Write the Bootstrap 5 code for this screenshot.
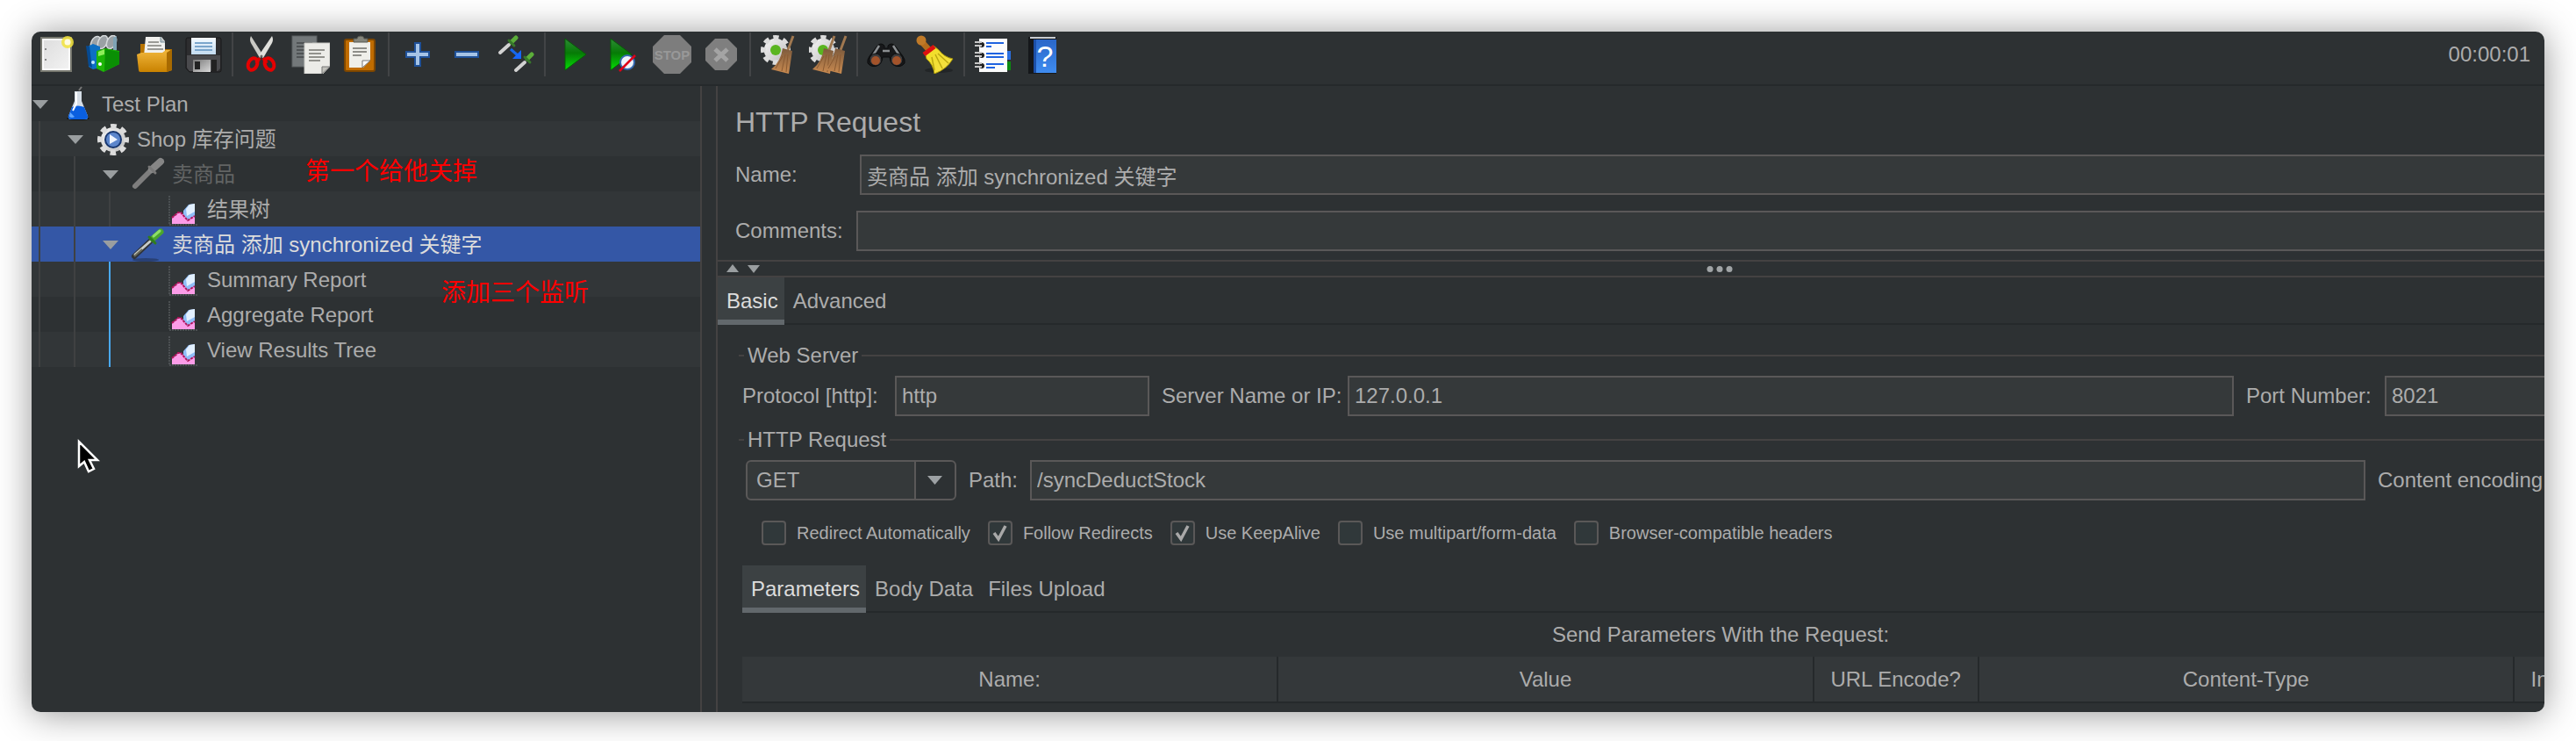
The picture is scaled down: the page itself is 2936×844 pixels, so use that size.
<!DOCTYPE html>
<html lang="zh-CN">
<head>
<meta charset="utf-8">
<meta name="viewport" content="width=device-width, initial-scale=1">
<title>Test Plan - HTTP Request</title>
<link href="https://cdn.jsdelivr.net/npm/bootstrap@5.3.0/dist/css/bootstrap.min.css" rel="stylesheet">
<style>
:root{
  --pane:#2d3133; --stripe:#323638; --field:#35393a; --edge:#5a5858; --rule:#444242; --dark-rule:#25292b;
  --ink:#acacac; --ink-strong:#dcdcdc; --ink-off:#626464; --select:#3457a6;
}
body{background:#fff;color:var(--ink);font-family:"Liberation Sans","Noto Sans CJK SC",sans-serif;font-size:24px;line-height:30px;overflow-x:hidden}
.app-window{margin:36px;background:var(--pane);border-radius:10px;overflow:hidden}
.app-shadow{border-radius:10px;box-shadow:0 2px 40px rgba(0,0,0,.42)}
.toolbar{height:62px;border-bottom:2px solid var(--dark-rule);padding:0 16px 8px 0}
.tool{width:56px;height:44px;padding:0 6px;border:0;background:none;line-height:0}
.tool svg{width:44px;height:44px}
.tool-sep{width:2px;height:50px;margin:0 4px;background:#424446}
.timer{line-height:30px}

.tree-pane{width:764px;flex:none;border-right:2px solid var(--rule)}
.tree-row{height:40px;padding-top:2px;white-space:nowrap}
.tree-row:nth-child(even){background:var(--stripe)}
.tree-row.stripe{background:var(--stripe)}
.tree-row.plain{background:var(--pane)}
.tree-row.selected{background:var(--select);color:var(--ink-strong)}
.tree-row.off{color:var(--ink-off)}
.guide{width:40px;flex:none;align-self:stretch;margin-top:-2px;background:linear-gradient(#3f4142,#3f4142) 8px 0/2px 100% no-repeat}
.guide.active{background:linear-gradient(#4aa9f2,#4aa9f2) 8px 0/2px 100% no-repeat}
.twisty{width:20px;flex:none;line-height:0;margin-right:11px}
.twisty svg{width:20px;height:12px}
.node-icon{width:44px;height:40px;flex:none;margin:-2px 5px 0 0}
.note{position:absolute;color:#f00;font-size:28px;line-height:42px;white-space:nowrap}
.note-close{left:312px;top:77px}
.note-listen{left:467px;top:215px}
.pointer{position:absolute;left:50px;top:402px;width:28px;height:40px}

.splitter{width:16px;flex:none}
.work-pane{min-width:0;overflow:hidden;border-left:2px solid var(--rule)}
.work-inner{width:calc(100% + 202px)}
.head-form{padding:21px 0 10px 20px}
.head-form h1{font-size:32px;line-height:40px;margin:0 0 17px;font-weight:400;color:var(--ink)}
.form-control,.form-select{height:46px;border:2px solid var(--edge);border-radius:0;background-color:var(--field);color:var(--ink);font-size:24px;line-height:30px;padding:0 6px}
.form-select{width:240px;border-radius:6px;padding-left:10px;background-image:url("data:image/svg+xml,%3Csvg xmlns='http://www.w3.org/2000/svg' viewBox='0 0 46 42'%3E%3Cpath fill='%232d3133' d='M0 0h46v42H0z'/%3E%3Cpath fill='%235a5858' d='M0 0h2v42H0z'/%3E%3Cpath fill='%239da1a4' d='M15 16h17l-8.500 10z'/%3E%3C/svg%3E");background-size:46px 42px;background-position:right 0 top 0}
.lbl-name{width:142px}.lbl-comments{width:138px}
.lbl-protocol{width:174px}.lbl-server{width:214px}.lbl-port{width:160px}.lbl-path{width:72px}.lbl-encoding{width:196px}
.lbl-inner{padding-left:2px;white-space:nowrap}
.w-protocol{width:290px}.w-port{width:358px}.w-encoding{width:172px}
.name-row{margin-bottom:18px}
.collapse-bar{height:20px;border-top:2px solid var(--rule);border-bottom:2px solid var(--rule);position:relative}
.collapse-bar button{border:0;padding:0;background:none;line-height:0;width:14px;height:12px}
.collapse-btns{gap:10px;padding-left:10px}
.grip i{width:7px;height:7px;border-radius:50%;background:#a0a4a6}
.tab-strip{height:54px;border-bottom:2px solid var(--dark-rule)}
.tab-strip button{height:54px;padding:0 7px 0 10px;border:0;background:none;color:var(--ink);white-space:nowrap}
.tab-strip button.active{background:#3c4143;color:var(--ink-strong);box-shadow:inset 0 -6px #62686c}
.basic-pane{padding:20px 26px 10px 24px}
.group-title{float:none;font-size:24px;line-height:30px;margin:0 0 8px;gap:4px}
.group-title::before,.group-title::after{content:"";height:2px;background:var(--rule);width:6px}
.group-title::after{flex:1}
.http-group{margin-top:12px}
.field-row{padding-left:4px}
.check-row{gap:20px;font-size:20px;padding-left:26px;margin:22px 0}
.check-row .form-check-input{width:28px;height:28px;margin:0;float:none;border:2px solid var(--edge);border-radius:4px;background-color:#30383a}
.check-row .form-check-input:checked{background-image:url("data:image/svg+xml,%3Csvg xmlns='http://www.w3.org/2000/svg' viewBox='0 0 24 24'%3E%3Cpath fill='none' stroke='%23a8a8a8' stroke-width='3.500' d='M5 12l5 7 8-15'/%3E%3C/svg%3E")}
.inner-tabs{margin-left:4px;margin-right:-26px}
.param-area{margin-left:4px}
.param-title{margin:10px 0}
.param-table{table-layout:fixed;width:100%}
.param-table th{height:52px;background:#34383a;border-bottom:2px solid var(--dark-rule);border-right:2px solid var(--dark-rule);font-weight:400;text-align:center;padding:0}
.c-encode{width:188px}.c-equals{width:210px}
</style>
</head>
<body>

<svg width="0" height="0" class="position-absolute" aria-hidden="true">
  <defs>
    <linearGradient id="gGreen" x1="0" y1="0" x2="0" y2="1"><stop offset="0" stop-color="#2e8b36"/><stop offset=".45" stop-color="#067a06"/><stop offset="1" stop-color="#04e004"/></linearGradient>
    <linearGradient id="gFolder" x1="0" y1="0" x2="0" y2="1"><stop offset="0" stop-color="#f0b63c"/><stop offset="1" stop-color="#c98200"/></linearGradient>
    <linearGradient id="gPaper" x1="0" y1="0" x2="1" y2="1"><stop offset="0" stop-color="#dcdcdc"/><stop offset="1" stop-color="#f4f4f4"/></linearGradient>
    <linearGradient id="gLabel" x1="0" y1="0" x2="0" y2="1"><stop offset="0" stop-color="#f4faff"/><stop offset="1" stop-color="#c3dbf0"/></linearGradient>
    <linearGradient id="gMetal" x1="0" y1="0" x2="1" y2="1"><stop offset="0" stop-color="#777"/><stop offset="1" stop-color="#d8d8d8"/></linearGradient>
    <linearGradient id="gBroom" x1="0" y1="0" x2="0" y2="1"><stop offset="0" stop-color="#7c5a3c"/><stop offset="1" stop-color="#c98a50"/></linearGradient>
    <linearGradient id="gBlue" x1="0" y1="0" x2="0" y2="1"><stop offset="0" stop-color="#2a66c8"/><stop offset="1" stop-color="#3f8cf0"/></linearGradient>
    <linearGradient id="gYellow" x1="0" y1="0" x2="1" y2="1"><stop offset="0" stop-color="#f0de20"/><stop offset="1" stop-color="#f5e04a"/></linearGradient>
    <linearGradient id="gSteel" x1="0" y1="0" x2="1" y2="1"><stop offset="0" stop-color="#f6f6f6"/><stop offset="1" stop-color="#bcbcbc"/></linearGradient>
    <symbol id="gear" viewBox="0 0 36 36">
      <circle cx="18" cy="18" r="14" fill="url(#gSteel)"/>
      <circle cx="18" cy="18" r="15" fill="none" stroke="#dcdcdc" stroke-width="6" stroke-dasharray="6.500 5.280" stroke-dashoffset="3.250"/>
    </symbol>
    <symbol id="broomette" viewBox="0 0 28 44">
      <path d="M26 1l-6 16" stroke="#a07850" stroke-width="3" fill="none"/>
      <path d="M14 15l11 3-4 26-8-2-12-3q11-9 13-24z" fill="url(#gBroom)"/>
      <path d="M17 22l-4 19M20 22l-2 20M14 24l-8 14" stroke="#8a5a32" stroke-width="1" fill="none"/>
    </symbol>
    <symbol id="flask" viewBox="0 0 44 40">
      <path d="M26 1l-3 4" stroke="#777" stroke-width="2"/>
      <ellipse cx="22" cy="37" rx="13" ry="2" fill="#15181a"/>
      <path d="M18 6h8v11l7 17q1 4-3 4H14q-4 0-3-4l7-17z" fill="#d5dde6"/>
      <path d="M15 24q7-3 14 0l4 10q1 4-3 4H14q-4 0-3-4z" fill="#0a5fe0"/>
      <path d="M13 30l-1 5q3 2 6 0z" fill="#5fa5ff"/>
      <path d="M20 7v13l-4 8" stroke="#fff" stroke-width="2" fill="none"/>
    </symbol>
    <symbol id="threads" viewBox="0 0 44 40">
      <use href="#gear" x="4" y="3" width="36" height="36"/>
      <circle cx="22" cy="21" r="10" fill="#17366f"/><circle cx="22" cy="21" r="8" fill="#5c86cc"/>
      <path d="M18 15l9 6-9 5z" fill="#eef4ff"/>
    </symbol>
    <symbol id="dropper" viewBox="0 0 44 40">
      <ellipse cx="19" cy="38" rx="15" ry="2" fill="#15181a" opacity=".35"/>
      <path d="M6 34L24 17" stroke="#30343a" stroke-width="6" stroke-linecap="round"/>
      <path d="M7 32L24 17" stroke="#c8ccc8" stroke-width="3" stroke-linecap="round"/>
      <path d="M6 34l9-8" stroke="#6a6a58" stroke-width="2"/>
      <path d="M27 14L36 6" stroke="#4aa62c" stroke-width="7" stroke-linecap="round"/>
      <path d="M23 12l7 7" stroke="#2f7d1c" stroke-width="3" stroke-linecap="round"/>
      <path d="M28 11l7-6" stroke="#8ede68" stroke-width="3" stroke-linecap="round"/>
    </symbol>
    <symbol id="dropper-off" viewBox="0 0 44 40">
      <path d="M7 34L24 17" stroke="#7e7e7e" stroke-width="6" stroke-linecap="round"/>
      <path d="M26 15L36 6" stroke="#868686" stroke-width="8" stroke-linecap="round"/>
      <path d="M23 12l7 7" stroke="#787878" stroke-width="3" stroke-linecap="round"/>
    </symbol>
    <symbol id="chart" viewBox="0 0 44 40">
      <path d="M6 5v33h32" stroke="#555a5c" stroke-width="1.500" stroke-dasharray="2 1" fill="none"/>
      <path d="M22 32V22l6-7 7-1v20z" fill="#8fbdf8"/><path d="M25 20l4-5 6-1v9l-9 5z" fill="#e2f0ff"/>
      <path d="M9 37v-7l7-6h4l7 9 8-5v9z" fill="#fb9ce8"/>
      <path d="M9 30l7-6h3l8 9 8-5" stroke="#b0155c" stroke-width="2" stroke-dasharray="3 1" fill="none"/>
    </symbol>
    <symbol id="down" viewBox="0 0 20 12"><path d="M1 1h18l-9 10z" fill="#9a9ea0"/></symbol>
  </defs>
</svg>

<div class="app-window app-shadow">
  <header class="toolbar d-flex align-items-center" role="toolbar">
    <button class="tool" title="New"><svg viewBox="0 0 44 44"><rect x="5" y="3" width="34" height="38" fill="url(#gPaper)" stroke="#77786f" stroke-width="2"/><rect x="7" y="5" width="30" height="34" fill="none" stroke="#fff" stroke-width="1.500"/><path d="M9 16h2M9 28h2" stroke="#888" stroke-width="2"/><circle cx="35" cy="8" r="7" fill="#f2e33c" opacity=".85"/><circle cx="35" cy="8" r="3.500" fill="#fffbe0"/></svg></button>
    <button class="tool" title="Templates"><svg viewBox="0 0 44 44"><g fill="#9aa0a4" stroke="#d4d8da" stroke-width="1.500"><ellipse cx="11" cy="9" rx="5" ry="8" transform="rotate(25 11 9)"/><ellipse cx="19" cy="8" rx="5" ry="8" transform="rotate(25 19 8)"/><ellipse cx="29" cy="8" rx="5" ry="8" transform="rotate(25 29 8)"/></g><path d="M31 3l4-2v16l-4 2z" fill="#7fa3b5"/><path d="M2 13l6-3 8 3v24l-8 2-5-3z" fill="#0d6fc4"/><path d="M0 12l4 1 3 24-4-2z" fill="#064a92"/><path d="M12 18l10-3 16 3v15l-18 9-8-4z" fill="#1db507"/><path d="M22 16l16 3v14l-17 8z" fill="#0a8f04"/><path d="M14 19l7-3 0 6-7 2z" fill="#8fee5a"/><circle cx="16" cy="33" r="2" fill="#fff"/><circle cx="8" cy="31" r="2" fill="#bfe4ff"/></svg></button>
    <button class="tool" title="Open"><svg viewBox="0 0 44 44"><path d="M6 10h10v6h26v24l-6 2H6z" fill="#b87400"/><path d="M12 2h18l4 5v17H10z" fill="#f1f1ee"/><path d="M15 8h12M14 12h16M14 16h18" stroke="#9b9b96" stroke-width="2"/><path d="M29 2v6h5" fill="#bcc4c6" stroke="#78909a"/><path d="M2 22l5-2h24l4-3h5v23l-4 2H6q-2 0-2-2z" fill="url(#gFolder)"/><path d="M36 20l6-4v24l-6 2z" fill="#a86a00"/></svg></button>
    <button class="tool" title="Save"><svg viewBox="0 0 44 44"><path d="M4 3h36q2 0 2 2v35q0 2-2 2H6l-4-4V5q0-2 2-2z" fill="#2d2d2f" stroke="#19191a"/><path d="M3 23h38v15l-3 3H6l-3-4z" fill="#4a4a4d"/><rect x="8" y="3" width="28" height="19" fill="url(#gLabel)"/><path d="M12 9h20M12 13h20M12 17h20" stroke="#7ba6cc" stroke-width="2"/><rect x="10" y="28" width="20" height="14" fill="url(#gMetal)"/><rect x="12" y="30" width="6" height="9" fill="#222"/><path d="M31 28h6v13h-6z" fill="#222"/></svg></button>
    <span class="tool-sep"></span>
    <button class="tool" title="Cut"><svg viewBox="0 0 44 44"><path d="M10 1q-2 4 0 8l10 17 4-3z" fill="#c9c9c4"/><path d="M34 1q2 4 0 8L24 26l-5-3z" fill="#e0e0dc"/><path d="M20 26l-4 6M24 26l4 6" stroke="#d80000" stroke-width="4"/><ellipse cx="12" cy="33" rx="5" ry="7" transform="rotate(25 12 33)" fill="none" stroke="#e60000" stroke-width="4"/><ellipse cx="31" cy="33" rx="5" ry="7" transform="rotate(-25 31 33)" fill="none" stroke="#e60000" stroke-width="4"/><circle cx="22" cy="24" r="1.500" fill="#666"/></svg></button>
    <button class="tool" title="Copy"><svg viewBox="0 0 44 44"><rect x="1" y="1" width="28" height="35" fill="#73787a" stroke="#5d6163"/><path d="M6 9h18M6 13h10M6 17h10M6 21h10M6 25h10" stroke="#4f5355" stroke-width="2"/><path d="M15 9h29v27l-8 8H15z" fill="#ecece8" stroke="#c8c8c4"/><path d="M20 17h18M20 21h14M20 25h18M20 29h13" stroke="#92928d" stroke-width="2"/><path d="M35 44v-8h9z" fill="#c2c2bc" stroke="#777"/></svg></button>
    <button class="tool" title="Paste"><svg viewBox="0 0 44 44"><rect x="5" y="5" width="34" height="36" rx="2" fill="#c06c00" stroke="#7d4600" stroke-width="2"/><path d="M10 8h24v20l-8 9H10z" fill="#efefea"/><path d="M14 15h16M14 19h16M14 23h10" stroke="#8e8e89" stroke-width="2"/><path d="M25 37v-8h9z" fill="#fff" stroke="#777"/><path d="M15 8V4h4q0-3 4-3t4 3h4v4z" fill="#84857c" stroke="#55564e"/></svg></button>
    <span class="tool-sep"></span>
    <button class="tool" title="Expand All"><svg viewBox="0 0 44 44"><path d="M19 9h6v10h10v6H25v10h-6V25H9v-6h10z" fill="#a5c3e6" stroke="#1f5199" stroke-width="2"/></svg></button>
    <button class="tool" title="Collapse All"><svg viewBox="0 0 44 44"><path d="M9 19h26v6H9z" fill="#a5c3e6" stroke="#1f5199" stroke-width="2"/></svg></button>
    <button class="tool" title="Toggle"><svg viewBox="0 0 44 44"><g stroke-linecap="round"><path d="M4 20L14 11M22 40l10-9" stroke="#d2d2d2" stroke-width="4"/><path d="M17 8l5-5M35 27l5-5" stroke="#5cae3a" stroke-width="5"/><path d="M14 6l6 6M32 25l6 6" stroke="#37782a" stroke-width="3"/></g><path d="M16 16l8 7" stroke="#1767e8" stroke-width="3"/><path d="M28 17v10H18z" fill="#1767ff"/></svg></button>
    <span class="tool-sep"></span>
    <button class="tool" title="Start"><svg viewBox="0 0 44 44"><path d="M12 4l24 18-24 18z" fill="url(#gGreen)" stroke="#075c07"/></svg></button>
    <button class="tool" title="Start no pauses"><svg viewBox="0 0 44 44"><path d="M8 4l24 18L8 40z" fill="url(#gGreen)" stroke="#075c07"/><circle cx="27" cy="31" r="8" fill="#eef4fb" stroke="#3668b0" stroke-width="2"/><path d="M18 41l18-18" stroke="#e00018" stroke-width="2.500"/></svg></button>
    <button class="tool" title="Stop" disabled><svg viewBox="0 0 44 44"><path d="M13 0h18l13 13v18L31 44H13L0 31V13z" fill="#7d7d7d"/><text x="22" y="28" text-anchor="middle" font-family="Liberation Sans Narrow, Liberation Sans, sans-serif" font-weight="700" font-size="15" fill="#989898">STOP</text></svg></button>
    <button class="tool" title="Shutdown" disabled><svg viewBox="0 0 44 44"><path d="M15 4h14l11 11v14L29 40H15L4 29V15z" fill="#7f7f7f"/><path d="M15 16l14 13M29 16L15 29" stroke="#a4a4a4" stroke-width="5"/></svg></button>
    <span class="tool-sep"></span>
    <button class="tool" title="Clear"><svg viewBox="0 0 44 44"><use href="#gear" x="1" y="0" width="34" height="34"/><circle cx="18" cy="17" r="6" fill="#5ab520"/><use href="#broomette" x="12" y="0" width="28" height="44"/></svg></button>
    <button class="tool" title="Clear All"><svg viewBox="0 0 44 44"><use href="#gear" x="-1" y="0" width="34" height="34"/><circle cx="16" cy="17" r="6" fill="#5ab520"/><use href="#broomette" x="3" y="0" width="28" height="44"/><use href="#broomette" x="16" y="0" width="28" height="44"/></svg></button>
    <span class="tool-sep"></span>
    <button class="tool" title="Search"><svg viewBox="0 0 44 44"><path d="M12 12q4-4 8 0v3h4v-3q4-4 8 0l9 12q3 4 2 8-4 5-10 3-6-2-7-10h-8q-1 8-7 10-6 2-10-3-1-4 2-8z" fill="#17181a" stroke="#0c0d0e"/><path d="M14 12l-7 11M30 12l7 11M18 18h8" stroke="#8a8e91" stroke-width="2.500"/><circle cx="10" cy="28" r="7" fill="#3c3c3e" stroke="#0c0d0e"/><circle cx="34" cy="28" r="7" fill="#3c3c3e" stroke="#0c0d0e"/><circle cx="10" cy="29" r="5" fill="#a3532a"/><circle cx="34" cy="29" r="5" fill="#a3532a"/></svg></button>
    <button class="tool" title="Reset Search"><svg viewBox="0 0 44 44"><ellipse cx="26" cy="40" rx="16" ry="3" fill="#222527"/><path d="M6 7l9 10" stroke="#b56d1c" stroke-width="7"/><circle cx="6" cy="6" r="5.500" fill="#c07a28"/><path d="M10 19l10-7 6 5q6 8 16 10-7 12-21 17-1-10-9-17z" fill="url(#gYellow)" stroke="#a89608"/><path d="M22 22l8 16M25 21l12 11M18 25l3 15" stroke="#bba810" stroke-width="1.500"/><path d="M9 22l12-9" stroke="#dc1010" stroke-width="5"/></svg></button>
    <span class="tool-sep"></span>
    <button class="tool" title="Function Helper"><svg viewBox="0 0 44 44"><path d="M38 18h4v10h-4z" fill="#2a6fe0"/><path d="M38 30h4v10h-4z" fill="#0c8a10"/><rect x="6" y="4" width="32" height="38" fill="#fbfbfb"/><path d="M14 9h20M14 13h6M14 21h20M14 25h20M14 33h20M14 37h10" stroke="#1f63e0" stroke-width="2"/><g fill="#222"><circle cx="9" cy="11" r="3"/><circle cx="9" cy="23" r="3"/><circle cx="9" cy="35" r="3"/></g><path d="M1 8h8M1 12h8M1 20h8M1 24h8M1 32h8M1 36h8" stroke="#c6c6c6" stroke-width="2"/></svg></button>
    <button class="tool" title="Help"><svg viewBox="0 0 44 44"><path d="M6 2h32v42H6z" fill="#15171a"/><path d="M8 3h29" stroke="#c8ccd0" stroke-width="2"/><path d="M12 5h26v38H12z" fill="url(#gBlue)"/><path d="M12 5h3v38h-3z" fill="#1c4fa8"/><text x="25" y="36" text-anchor="middle" font-family="Liberation Sans, sans-serif" font-size="34" fill="#fff">?</text></svg></button>
    <time class="timer ms-auto">00:00:01</time>
  </header>

  <div class="d-flex">
    <nav class="tree-pane position-relative" aria-label="Test plan tree">
      <div class="tree-row d-flex align-items-center"><span class="twisty"><svg><use href="#down"/></svg></span><svg class="node-icon"><use href="#flask"/></svg>Test Plan</div>
      <div class="tree-row d-flex align-items-center"><span class="guide"></span><span class="twisty"><svg><use href="#down"/></svg></span><svg class="node-icon"><use href="#threads"/></svg>Shop 库存问题</div>
      <div class="tree-row off d-flex align-items-center"><span class="guide"></span><span class="guide"></span><span class="twisty"><svg><use href="#down"/></svg></span><svg class="node-icon"><use href="#dropper-off"/></svg>卖商品</div>
      <div class="tree-row d-flex align-items-center"><span class="guide"></span><span class="guide"></span><span class="guide"></span><span class="twisty"></span><svg class="node-icon"><use href="#chart"/></svg>结果树</div>
      <div class="tree-row selected d-flex align-items-center"><span class="guide"></span><span class="guide"></span><span class="twisty"><svg><use href="#down"/></svg></span><svg class="node-icon"><use href="#dropper"/></svg>卖商品 添加 synchronized 关键字</div>
      <div class="tree-row stripe d-flex align-items-center"><span class="guide"></span><span class="guide"></span><span class="guide active"></span><span class="twisty"></span><svg class="node-icon"><use href="#chart"/></svg>Summary Report</div>
      <div class="tree-row plain d-flex align-items-center"><span class="guide"></span><span class="guide"></span><span class="guide active"></span><span class="twisty"></span><svg class="node-icon"><use href="#chart"/></svg>Aggregate Report</div>
      <div class="tree-row stripe d-flex align-items-center"><span class="guide"></span><span class="guide"></span><span class="guide active"></span><span class="twisty"></span><svg class="node-icon"><use href="#chart"/></svg>View Results Tree</div>
      <span class="note note-close">第一个给他关掉</span>
      <span class="note note-listen">添加三个监听</span>
      <svg class="pointer" viewBox="0 0 28 40" aria-hidden="true"><path d="M4 3v28l6-5 5 11 6-3-5-10h9z" fill="#000" stroke="#fff" stroke-width="2.500"/></svg>
    </nav>
    <div class="splitter"></div>

    <main class="work-pane flex-grow-1">
      <div class="work-inner">
        <section class="head-form">
          <h1>HTTP Request</h1>
          <div class="name-row d-flex align-items-center">
            <label class="lbl-name flex-shrink-0" for="name">Name:</label>
            <input class="form-control" id="name" type="text" value="卖商品 添加 synchronized 关键字">
          </div>
          <div class="d-flex align-items-center">
            <label class="lbl-comments flex-shrink-0" for="comments">Comments:</label>
            <input class="form-control" id="comments" type="text">
          </div>
        </section>

        <div class="collapse-bar d-flex align-items-center">
          <div class="collapse-btns d-flex"><button title="Collapse up"><svg width="14" height="10" viewBox="0 0 14 10"><path d="M7 0l7 9H0z" fill="#9a9ea0"/></svg></button><button title="Collapse down"><svg width="14" height="10" viewBox="0 0 14 10"><path d="M0 1h14L7 10z" fill="#9a9ea0"/></svg></button></div>
          <div class="grip d-flex gap-1 position-absolute start-50 translate-middle-x"><i></i><i></i><i></i></div>
        </div>

        <div class="tab-strip d-flex" role="tablist">
          <button class="active" role="tab" aria-selected="true">Basic</button>
          <button role="tab" aria-selected="false">Advanced</button>
        </div>

        <div class="basic-pane">
          <fieldset>
            <legend class="group-title d-flex align-items-center">Web Server</legend>
            <div class="field-row d-flex align-items-center">
              <label class="lbl-protocol flex-shrink-0" for="protocol">Protocol [http]:</label>
              <input class="form-control w-protocol flex-shrink-0 me-2" id="protocol" type="text" value="http">
              <label class="lbl-server lbl-inner flex-shrink-0 ms-1" for="server">Server Name or IP:</label>
              <input class="form-control me-2" id="server" type="text" value="127.0.0.1">
              <label class="lbl-port lbl-inner flex-shrink-0 ms-1" for="port">Port Number:</label>
              <input class="form-control w-port flex-shrink-0" id="port" type="text" value="8021">
            </div>
          </fieldset>
          <fieldset class="http-group">
            <legend class="group-title d-flex align-items-center">HTTP Request</legend>
            <div class="field-row d-flex align-items-center">
              <select class="form-select flex-shrink-0 me-2 ms-1" aria-label="Method"><option>GET</option><option>POST</option></select>
              <label class="lbl-path lbl-inner flex-shrink-0 ms-1" for="path">Path:</label>
              <input class="form-control me-2" id="path" type="text" value="/syncDeductStock">
              <label class="lbl-encoding lbl-inner flex-shrink-0 ms-1" for="encoding">Content encoding:</label>
              <input class="form-control w-encoding flex-shrink-0" id="encoding" type="text">
            </div>
            <div class="check-row d-flex">
              <div class="d-flex align-items-center"><input class="form-check-input" type="checkbox" id="c1"><label class="ps-2 ms-1" for="c1">Redirect Automatically</label></div>
              <div class="d-flex align-items-center"><input class="form-check-input" type="checkbox" id="c2" checked><label class="ps-2 ms-1" for="c2">Follow Redirects</label></div>
              <div class="d-flex align-items-center"><input class="form-check-input" type="checkbox" id="c3" checked><label class="ps-2 ms-1" for="c3">Use KeepAlive</label></div>
              <div class="d-flex align-items-center"><input class="form-check-input" type="checkbox" id="c4"><label class="ps-2 ms-1" for="c4">Use multipart/form-data</label></div>
              <div class="d-flex align-items-center"><input class="form-check-input" type="checkbox" id="c5"><label class="ps-2 ms-1" for="c5">Browser-compatible headers</label></div>
            </div>
          </fieldset>

          <div class="tab-strip inner-tabs d-flex" role="tablist">
            <button class="active" role="tab" aria-selected="true">Parameters</button>
            <button role="tab" aria-selected="false">Body Data</button>
            <button role="tab" aria-selected="false">Files Upload</button>
          </div>
          <div class="param-area">
            <div class="text-center param-title">Send Parameters With the Request:</div>
            <table class="param-table">
              <colgroup><col><col><col class="c-encode"><col><col class="c-equals"></colgroup>
              <thead><tr><th scope="col">Name:</th><th scope="col">Value</th><th scope="col">URL Encode?</th><th scope="col">Content-Type</th><th scope="col">Include Equals?</th></tr></thead>
            </table>
          </div>
        </div>
      </div>
    </main>
  </div>
</div>

<script src="https://cdn.jsdelivr.net/npm/bootstrap@5.3.0/dist/js/bootstrap.bundle.min.js"></script>
</body>
</html>
